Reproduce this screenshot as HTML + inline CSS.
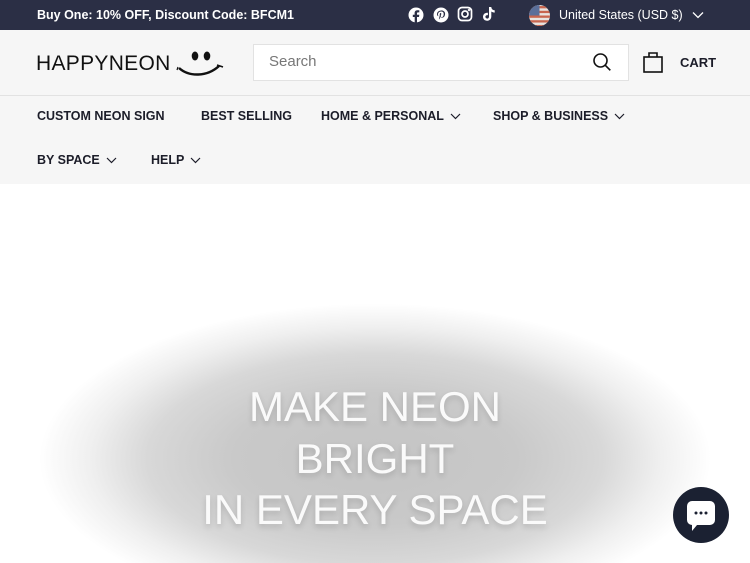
<!DOCTYPE html>
<html style="width:750px;height:563px;overflow:hidden"><head><meta charset="utf-8"><style>
*{margin:0;padding:0;box-sizing:border-box}
html,body{width:750px;height:563px;overflow:hidden}
body{background:#fff;font-family:"Liberation Sans",sans-serif;position:relative}
.a{position:absolute}
.top{left:0;top:0;width:750px;height:30px;background:#2b2f45}
.hdr{left:0;top:30px;width:750px;height:154px;background:#f6f6f6}
.line{left:0;top:95px;width:750px;height:1px;background:#e2e2e2}
.nav{font-size:12.5px;font-weight:bold;color:#1c1d29;white-space:nowrap}
.chev{display:inline-block;vertical-align:middle;margin-left:6px}
.wrap{left:0;top:184px;width:750px;height:379px;overflow:hidden}
.glow{position:absolute;left:40px;top:120px;width:670px;height:310px;border-radius:50%;background:radial-gradient(ellipse at center,#c4c4c4 0%,#c9c9c9 30%,#d8d8d8 48%,#efefef 60%,#fff 71%)}
.h{left:0;width:750px;text-align:center;color:#fafafa;font-size:42px;text-shadow:0 3px 6px rgba(0,0,0,.15)}
</style></head><body>
<div class="a top"></div>
<div class="a" style="left:37px;top:8px;color:#fff;font-size:12.5px;font-weight:bold">Buy One: 10% OFF, Discount Code: BFCM1</div>
<svg class="a" style="left:408px;top:7px" width="16" height="16" viewBox="0 0 16 16"><circle cx="8" cy="8" r="7.5" fill="#fff"/><path d="M9 16V10h2l.3-2.3H9V6.4c0-.6.2-1 1-1h1.3V3.3c-.3 0-1-.1-1.8-.1-1.8 0-2.9 1-2.9 3v1.6H4.8V10h1.9v6z" fill="#2b2f45"/></svg>
<svg class="a" style="left:433px;top:7px" width="16" height="16" viewBox="0 0 16 16"><circle cx="8" cy="8" r="7.5" fill="#fff"/><path d="M8.3 3.5c-3 0-4.3 2-4.3 3.6 0 1 .4 1.8 1.1 2.1l.3-.4c-.3-.4-.4-.7-.4-1.3 0-1.6 1.2-3 3.1-3 1.7 0 2.6 1 2.6 2.4 0 1.8-.8 3.3-2 3.3-.6 0-1.1-.5-1-1.2.2-.8.6-1.6.6-2.2 0-1.3-1.6-1.1-1.6.6 0 .4.1.7.1.7l-.9 4 .5.1 1-2.3c.3.5.9.8 1.5.8 2 0 3.2-1.8 3.2-4 0-1.8-1.5-3.3-3.8-3.3z" fill="#2b2f45"/></svg>
<svg class="a" style="left:457px;top:6px" width="16" height="16" viewBox="0 0 16 16" fill="none" stroke="#fff" stroke-width="1.7"><rect x="1.5" y="1.5" width="13" height="13" rx="3.5"/><circle cx="8" cy="8" r="3"/><circle cx="12" cy="4" r=".4" fill="#fff"/></svg>
<svg class="a" style="left:482px;top:6px" width="14" height="16" viewBox="0 0 14 16"><path d="M7 1h2.3c.2 2 1.4 3.2 3.4 3.3v2.3c-1.3 0-2.4-.4-3.4-1.1v5c0 2.6-2 4.3-4.3 4.3S1 13 1 10.8c0-2.5 2.2-4.4 4.9-4v2.4c-1.3-.4-2.5.4-2.5 1.6 0 1 .8 1.8 1.8 1.8S7 11.8 7 10.6z" fill="#fff"/></svg>
<svg class="a" style="left:529px;top:5px" width="21" height="21" viewBox="0 0 20 20"><defs><clipPath id="c"><circle cx="10" cy="10" r="10"/></clipPath></defs><g clip-path="url(#c)"><rect width="20" height="20" fill="#e8e4e0"/><rect y="1" width="20" height="2.2" fill="#c8664f"/><rect y="5.5" width="20" height="2.2" fill="#c8664f"/><rect y="10" width="20" height="2.2" fill="#c8664f"/><rect y="14.5" width="20" height="2.2" fill="#c8664f"/><rect y="19" width="20" height="2" fill="#c8664f"/><rect width="10" height="10" fill="#5b6f9a"/></g></svg>
<div class="a" style="left:559px;top:8px;color:#fff;font-size:12.5px">United States (USD $)</div>
<svg class="a" style="left:692px;top:11px" width="12" height="8" viewBox="0 0 12 8" fill="none" stroke="#fff" stroke-width="1.3"><path d="M1 1.5l5 5 5-5"/></svg>

<div class="a hdr"></div>
<div class="a line"></div>
<div class="a" style="left:36px;top:52px;font-size:21px;color:#111;letter-spacing:.3px">HAPPYNEON</div>
<svg class="a" style="left:176px;top:48px" width="50" height="30" viewBox="0 0 50 30"><ellipse cx="19" cy="8" rx="3.3" ry="4.5" fill="#111"/><ellipse cx="31" cy="8" rx="3.3" ry="4.5" fill="#111"/><path d="M3 20c10 9 28 9 40 -2" stroke="#111" stroke-width="2.5" fill="none"/><path d="M41 17l6 2" stroke="#111" stroke-width="1.5"/><path d="M2 19l-1 3" stroke="#111" stroke-width="1.2"/></svg>
<div class="a" style="left:253px;top:44px;width:376px;height:37px;background:#fff;border:1px solid #e2e2e2"></div>
<div class="a" style="left:269px;top:53px;font-size:15px;color:#777">Search</div>
<svg class="a" style="left:592px;top:52px" width="20" height="20" viewBox="0 0 20 20" fill="none" stroke="#111" stroke-width="1.6"><circle cx="8.5" cy="8.5" r="6.5"/><path d="M13.3 13.3l5 5"/></svg>
<svg class="a" style="left:642px;top:50px" width="22" height="24" viewBox="0 0 22 24" fill="none" stroke="#111" stroke-width="1.6"><rect x="2" y="7" width="18" height="15"/><path d="M7 7V3h8v4"/></svg>
<div class="a nav" style="left:680px;top:55px;font-size:13px">CART</div>

<div class="a nav" style="left:37px;top:109px">CUSTOM NEON SIGN</div>
<div class="a nav" style="left:201px;top:109px">BEST SELLING</div>
<div class="a nav" style="left:321px;top:109px">HOME &amp; PERSONAL<svg class="chev" width="11" height="7" viewBox="0 0 11 7" fill="none" stroke="#1c1d29" stroke-width="1.2"><path d="M1 1l4.5 4.5L10 1"/></svg></div>
<div class="a nav" style="left:493px;top:109px">SHOP &amp; BUSINESS<svg class="chev" width="11" height="7" viewBox="0 0 11 7" fill="none" stroke="#1c1d29" stroke-width="1.2"><path d="M1 1l4.5 4.5L10 1"/></svg></div>
<div class="a nav" style="left:37px;top:153px">BY SPACE<svg class="chev" width="11" height="7" viewBox="0 0 11 7" fill="none" stroke="#1c1d29" stroke-width="1.2"><path d="M1 1l4.5 4.5L10 1"/></svg></div>
<div class="a nav" style="left:151px;top:153px">HELP<svg class="chev" width="11" height="7" viewBox="0 0 11 7" fill="none" stroke="#1c1d29" stroke-width="1.2"><path d="M1 1l4.5 4.5L10 1"/></svg></div>

<div class="a wrap"><div class="glow"></div></div>
<div class="a h" style="top:383px">MAKE NEON</div>
<div class="a h" style="top:435px">BRIGHT</div>
<div class="a h" style="top:486px">IN EVERY SPACE</div>

<div class="a" style="left:673px;top:487px;width:56px;height:56px;border-radius:50%;background:#1b2132"></div>
<svg class="a" style="left:686px;top:500px" width="30" height="34" viewBox="0 0 30 34"><path d="M6 1h18a5 5 0 0 1 5 5v14a5 5 0 0 1-5 5H11l-5 6v-6a5 5 0 0 1-5-5V6a5 5 0 0 1 5-5z" fill="#fff"/><circle cx="10" cy="13" r="1.5" fill="#1b2132"/><circle cx="15" cy="13" r="1.5" fill="#1b2132"/><circle cx="20" cy="13" r="1.5" fill="#1b2132"/></svg>
</body></html>
